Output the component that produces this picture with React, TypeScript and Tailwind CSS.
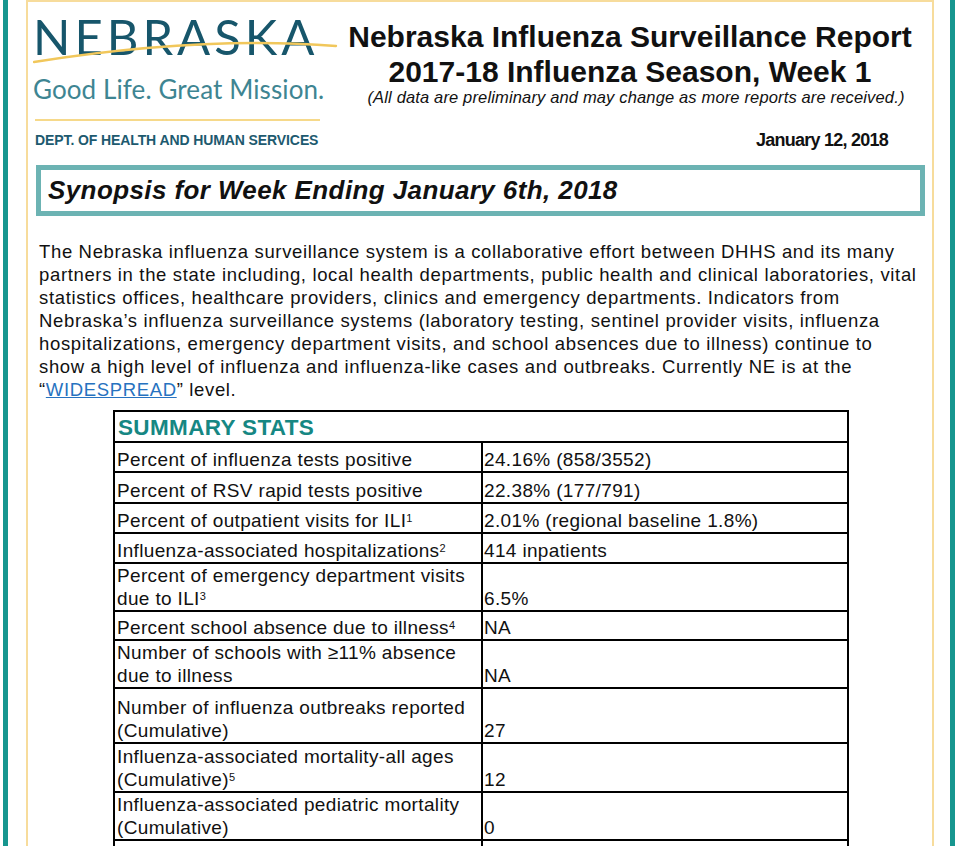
import React from 'react';

// Summary stats rows: label (with optional footnote), value, row height in px
interface StatRow {
  label: React.ReactNode;
  value: string;
  h: number;
}

const sup = (n: string) => <sup className="text-[11px] leading-none">{n}</sup>;

const rows: StatRow[] = [
  { label: 'Percent of influenza tests positive', value: '24.16% (858/3552)', h: 30 },
  { label: 'Percent of RSV rapid tests positive', value: '22.38% (177/791)', h: 31 },
  { label: <>Percent of outpatient visits for ILI{sup('1')}</>, value: '2.01% (regional baseline 1.8%)', h: 30 },
  { label: <>Influenza-associated hospitalizations{sup('2')}</>, value: '414 inpatients', h: 30 },
  { label: <>Percent of emergency department visits<br />due to ILI{sup('3')}</>, value: '6.5%', h: 48 },
  { label: <>Percent school absence due to illness{sup('4')}</>, value: 'NA', h: 29 },
  { label: <>Number of schools with ≥11% absence<br />due to illness</>, value: 'NA', h: 48 },
  { label: <>Number of influenza outbreaks reported<br />(Cumulative)</>, value: '27', h: 55 },
  { label: <>Influenza-associated mortality-all ages<br />(Cumulative){sup('5')}</>, value: '12', h: 49 },
  { label: <>Influenza-associated pediatric mortality<br />(Cumulative)</>, value: '0', h: 48 },
  { label: '', value: '', h: 40 },
];

const NebraskaLogo: React.FC = () => (
  <div className="relative w-[300px] pl-[5px] pt-[10px]">
    <div className="relative">
      <div className="font-['Lato',sans-serif] font-normal text-[49px] leading-[48px] tracking-[4px] text-[#17566b] whitespace-nowrap">
        NEBRASKA
      </div>
      <svg className="absolute left-0 top-[22px]" width="310" height="30" viewBox="0 0 310 30">
        <path d="M1 28 C 90 14, 200 4, 303 12" stroke="#f1c75b" strokeWidth="2.4" fill="none" strokeLinecap="round" />
      </svg>
    </div>
    <div className="mt-[14px] font-['Lato',sans-serif] font-normal text-[26px] leading-[30px] tracking-[0.1px] text-[#3e8592] whitespace-nowrap">
      Good Life. Great Mission.
    </div>
    <div className="mt-[15px] ml-[2px] h-[2px] w-[285px] bg-[#f6d98a]" />
    <div className="mt-[11px] ml-[2px] font-['Liberation_Sans',sans-serif] font-bold text-[14px] leading-[16px] tracking-[-0.1px] text-[#1d5a6f] whitespace-nowrap">
      DEPT. OF HEALTH AND HUMAN SERVICES
    </div>
  </div>
);

export default function App() {
  return (
    <div className="flex h-[846px] w-full overflow-hidden bg-white font-['Liberation_Sans',Arial,sans-serif] text-[#111]">
      <div className="ml-[3px] w-[5px] shrink-0 bg-[#17968f]" />
      <div className="ml-[18px] flex-1 border-l-2 border-r-2 border-t-2 border-[#f7dc9c]">
        {/* Header */}
        <div className="flex h-[160px]">
          <NebraskaLogo />
          <div className="flex-1 pt-[17px] text-center">
            <div className="text-[30px] font-bold leading-[35px]">Nebraska Influenza Surveillance Report</div>
            <div className="text-[30px] font-bold leading-[35px]">2017-18 Influenza Season, Week 1</div>
            <div className="pl-[12px] text-[16.5px] italic leading-[17px] tracking-[0.15px]">
              (All data are preliminary and may change as more reports are received.)
            </div>
            <div className="mt-[24px] pr-[44px] text-right text-[18px] font-bold leading-[21px] tracking-[-0.75px]">
              January 12, 2018
            </div>
          </div>
        </div>

        {/* Synopsis banner */}
        <div className="ml-[8px] mr-[7px] mt-[3px] h-[51px] border-[5px] border-[#6cb3b3] pl-[7px]">
          <div className="text-[26px] font-bold italic leading-[40px] tracking-[0.4px]">
            Synopsis for Week Ending January 6th, 2018
          </div>
        </div>

        {/* Synopsis paragraph */}
        <p className="ml-[11px] mt-[24px] whitespace-nowrap text-[18.5px] leading-[23px] tracking-[0.65px]">
          The Nebraska influenza surveillance system is a collaborative effort between DHHS and its many
          <br />
          partners in the state including, local health departments, public health and clinical laboratories, vital
          <br />
          statistics offices, healthcare providers, clinics and emergency departments. Indicators from
          <br />
          Nebraska’s influenza surveillance systems (laboratory testing, sentinel provider visits, influenza
          <br />
          hospitalizations, emergency department visits, and school absences due to illness) continue to
          <br />
          show a high level of influenza and influenza-like cases and outbreaks. Currently NE is at the
          <br />“<span className="text-[#2672c0] underline">WIDESPREAD</span>” level.
        </p>

        {/* Summary stats table */}
        <table className="ml-[85px] mt-[9px] w-[736px] border-collapse border-2 border-black text-[19px] leading-[23px] tracking-[0.35px]">
          <tbody>
            <tr className="h-[31px]">
              <td colSpan={2} className="border-2 border-black px-[3px] align-bottom text-[22.5px] font-bold leading-[27px] text-[#168783]">
                SUMMARY STATS
              </td>
            </tr>
            {rows.map((r, i) => (
              <tr key={i} style={{ height: r.h }}>
                <td className="w-[368px] border-2 border-black px-[2px] align-bottom whitespace-nowrap">{r.label}</td>
                <td className="border-2 border-black px-[1px] align-bottom whitespace-nowrap">{r.value}</td>
              </tr>
            ))}
          </tbody>
        </table>
      </div>
      <div className="ml-[16px] mr-[4px] w-[5px] shrink-0 bg-[#17968f]" />
    </div>
  );
}
